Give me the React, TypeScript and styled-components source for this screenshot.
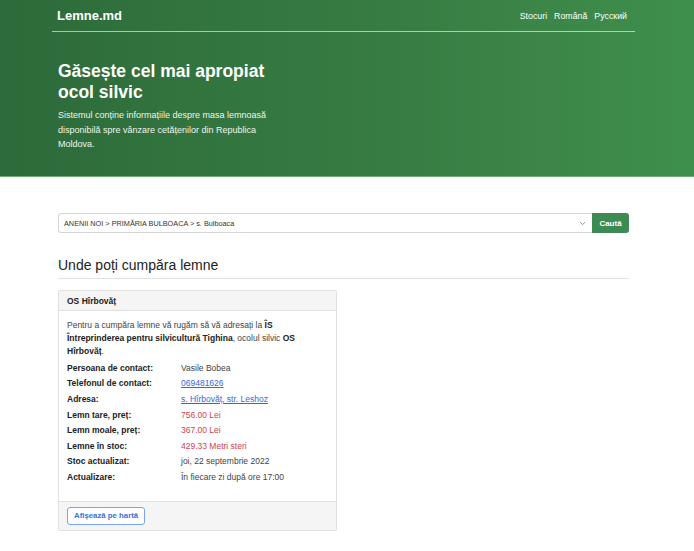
import React from "react";
import styled, { createGlobalStyle } from "styled-components";

const GlobalStyle = createGlobalStyle`
  body {
    margin: 0;
    background: #ffffff;
    font-family: "Liberation Sans", Arial, sans-serif;
    color: #222222;
  }
`;

const Hero = styled.header`
  height: 177px;
  background: linear-gradient(90deg, #2d6b3a 0%, #367a42 50%, #3f8f4c 100%);
  color: #ffffff;
  border-bottom: 1px solid #6fa97a;
  box-sizing: border-box;
`;

const Container = styled.div`
  width: 583px;
  margin-left: 52px;
  box-sizing: border-box;
`;

const Inner = styled.div`
  padding: 0 6px;
`;

const Navbar = styled.nav`
  display: flex;
  justify-content: space-between;
  align-items: center;
  height: 31px;
  padding: 0 8px 0 5px;
  border-bottom: 1px solid rgba(255, 255, 255, 0.6);
`;

const Logo = styled.a`
  font-size: 13px;
  font-weight: 700;
  color: #ffffff;
  text-decoration: none;
  margin-top: -1px;
`;

const NavLinks = styled.div`
  display: flex;
  gap: 7px;
  font-size: 8.8px;
`;

const NavLink = styled.a`
  color: #ffffff;
  text-decoration: none;
`;

const HeroText = styled.div`
  padding: 29px 0 0 6px;
  width: 240px;
`;

const HeroTitle = styled.h1`
  margin: 0 0 5px;
  font-size: 17.5px;
  line-height: 21px;
  font-weight: 700;
`;

const HeroLead = styled.p`
  margin: 0;
  font-size: 9px;
  line-height: 14.5px;
  width: 240px;
  color: #eef6ef;
`;

const SearchRow = styled.form`
  display: flex;
  margin-top: 36px;
  height: 20px;
`;

const SelectBox = styled.div`
  flex: 1;
  display: flex;
  align-items: center;
  justify-content: space-between;
  border: 1px solid #d6d6d6;
  border-right: none;
  border-radius: 3px 0 0 3px;
  padding: 0 6px 0 5px;
  font-size: 7.3px;
  color: #333333;
`;

const SearchButton = styled.button`
  width: 37px;
  border: none;
  border-radius: 0 3px 3px 0;
  background: #3d8a55;
  color: #ffffff;
  font-family: inherit;
  font-size: 8px;
  font-weight: 700;
  padding: 0;
`;

const SectionTitle = styled.h2`
  margin: 24px 0 0;
  padding-bottom: 5px;
  font-size: 14px;
  font-weight: 400;
  color: #222222;
  border-bottom: 1px solid #e2e2e2;
`;

const Card = styled.section`
  width: 279px;
  margin-top: 11px;
  border: 1px solid #e0e0e0;
  border-radius: 2px;
  box-sizing: border-box;
`;

const CardHeader = styled.div`
  height: 19px;
  display: flex;
  align-items: center;
  padding: 0 8px;
  background: #f5f5f5;
  border-bottom: 1px solid #e0e0e0;
  font-size: 8.5px;
  font-weight: 700;
  color: #222222;
`;

const CardBody = styled.div`
  padding: 8px 8px 16px;
  font-size: 8.5px;
  color: #444444;
`;

const Intro = styled.p`
  margin: 0 0 2px;
  line-height: 13px;

  b {
    color: #222222;
  }
`;

const InfoGrid = styled.div`
  display: grid;
  grid-template-columns: 114px 1fr;
  grid-auto-rows: 15.6px;
  align-items: center;
`;

const Label = styled.span`
  font-weight: 700;
  color: #222222;
`;

const Value = styled.span<{ $tone?: "link" | "red" }>`
  color: ${(p) =>
    p.$tone === "link" ? "#3467e0" : p.$tone === "red" ? "#d4414f" : "#444444"};
  text-decoration: ${(p) => (p.$tone === "link" ? "underline" : "none")};
`;

const CardFooter = styled.div`
  display: flex;
  align-items: center;
  padding: 5px 8px;
  background: #f5f5f5;
  border-top: 1px solid #e0e0e0;
`;

const MapButton = styled.button`
  height: 18px;
  padding: 0 6px;
  border: 1px solid #7aa4f3;
  border-radius: 3px;
  background: #ffffff;
  color: #3a6fe0;
  font-family: inherit;
  font-size: 7.8px;
  font-weight: 700;
`;

const rows: { label: string; value: string; tone?: "link" | "red" }[] = [
  { label: "Persoana de contact:", value: "Vasile Bobea" },
  { label: "Telefonul de contact:", value: "069481626", tone: "link" },
  { label: "Adresa:", value: "s. Hîrbovăț, str. Leshoz", tone: "link" },
  { label: "Lemn tare, preț:", value: "756.00 Lei", tone: "red" },
  { label: "Lemn moale, preț:", value: "367.00 Lei", tone: "red" },
  { label: "Lemne în stoc:", value: "429.33 Metri steri", tone: "red" },
  { label: "Stoc actualizat:", value: "joi, 22 septembrie 2022" },
  { label: "Actualizare:", value: "În fiecare zi după ore 17:00" },
];

const Chevron = () => (
  <svg width="7" height="5" viewBox="0 0 7 5">
    <path d="M1 1.2 L3.5 3.6 L6 1.2" fill="none" stroke="#888" strokeWidth="0.9" />
  </svg>
);

export default function App() {
  return (
    <>
      <GlobalStyle />
      <Hero>
        <Container>
          <Navbar>
            <Logo href="#">Lemne.md</Logo>
            <NavLinks>
              <NavLink href="#">Stocuri</NavLink>
              <NavLink href="#">Română</NavLink>
              <NavLink href="#">Русский</NavLink>
            </NavLinks>
          </Navbar>
          <HeroText>
            <HeroTitle>Găsește cel mai apropiat ocol silvic</HeroTitle>
            <HeroLead>
              Sistemul conține informațiile despre masa lemnoasă disponibilă spre
              vânzare cetățenilor din Republica
              <br />
              Moldova.
            </HeroLead>
          </HeroText>
        </Container>
      </Hero>
      <Container>
        <Inner>
          <SearchRow>
            <SelectBox>
              <span>ANENII NOI &gt; PRIMĂRIA BULBOACA &gt; s. Bulboaca</span>
              <Chevron />
            </SelectBox>
            <SearchButton type="button">Caută</SearchButton>
          </SearchRow>
          <SectionTitle>Unde poți cumpăra lemne</SectionTitle>
          <Card>
            <CardHeader>OS Hîrbovăț</CardHeader>
            <CardBody>
              <Intro>
                Pentru a cumpăra lemne vă rugăm să vă adresați la{" "}
                <b>ÎS Întreprinderea pentru silvicultură Tighina</b>, ocolul silvic{" "}
                <b>OS Hîrbovăț</b>.
              </Intro>
              <InfoGrid>
                {rows.map((r) => (
                  <React.Fragment key={r.label}>
                    <Label>{r.label}</Label>
                    <Value $tone={r.tone}>{r.value}</Value>
                  </React.Fragment>
                ))}
              </InfoGrid>
            </CardBody>
            <CardFooter>
              <MapButton type="button">Afișează pe hartă</MapButton>
            </CardFooter>
          </Card>
        </Inner>
      </Container>
    </>
  );
}
